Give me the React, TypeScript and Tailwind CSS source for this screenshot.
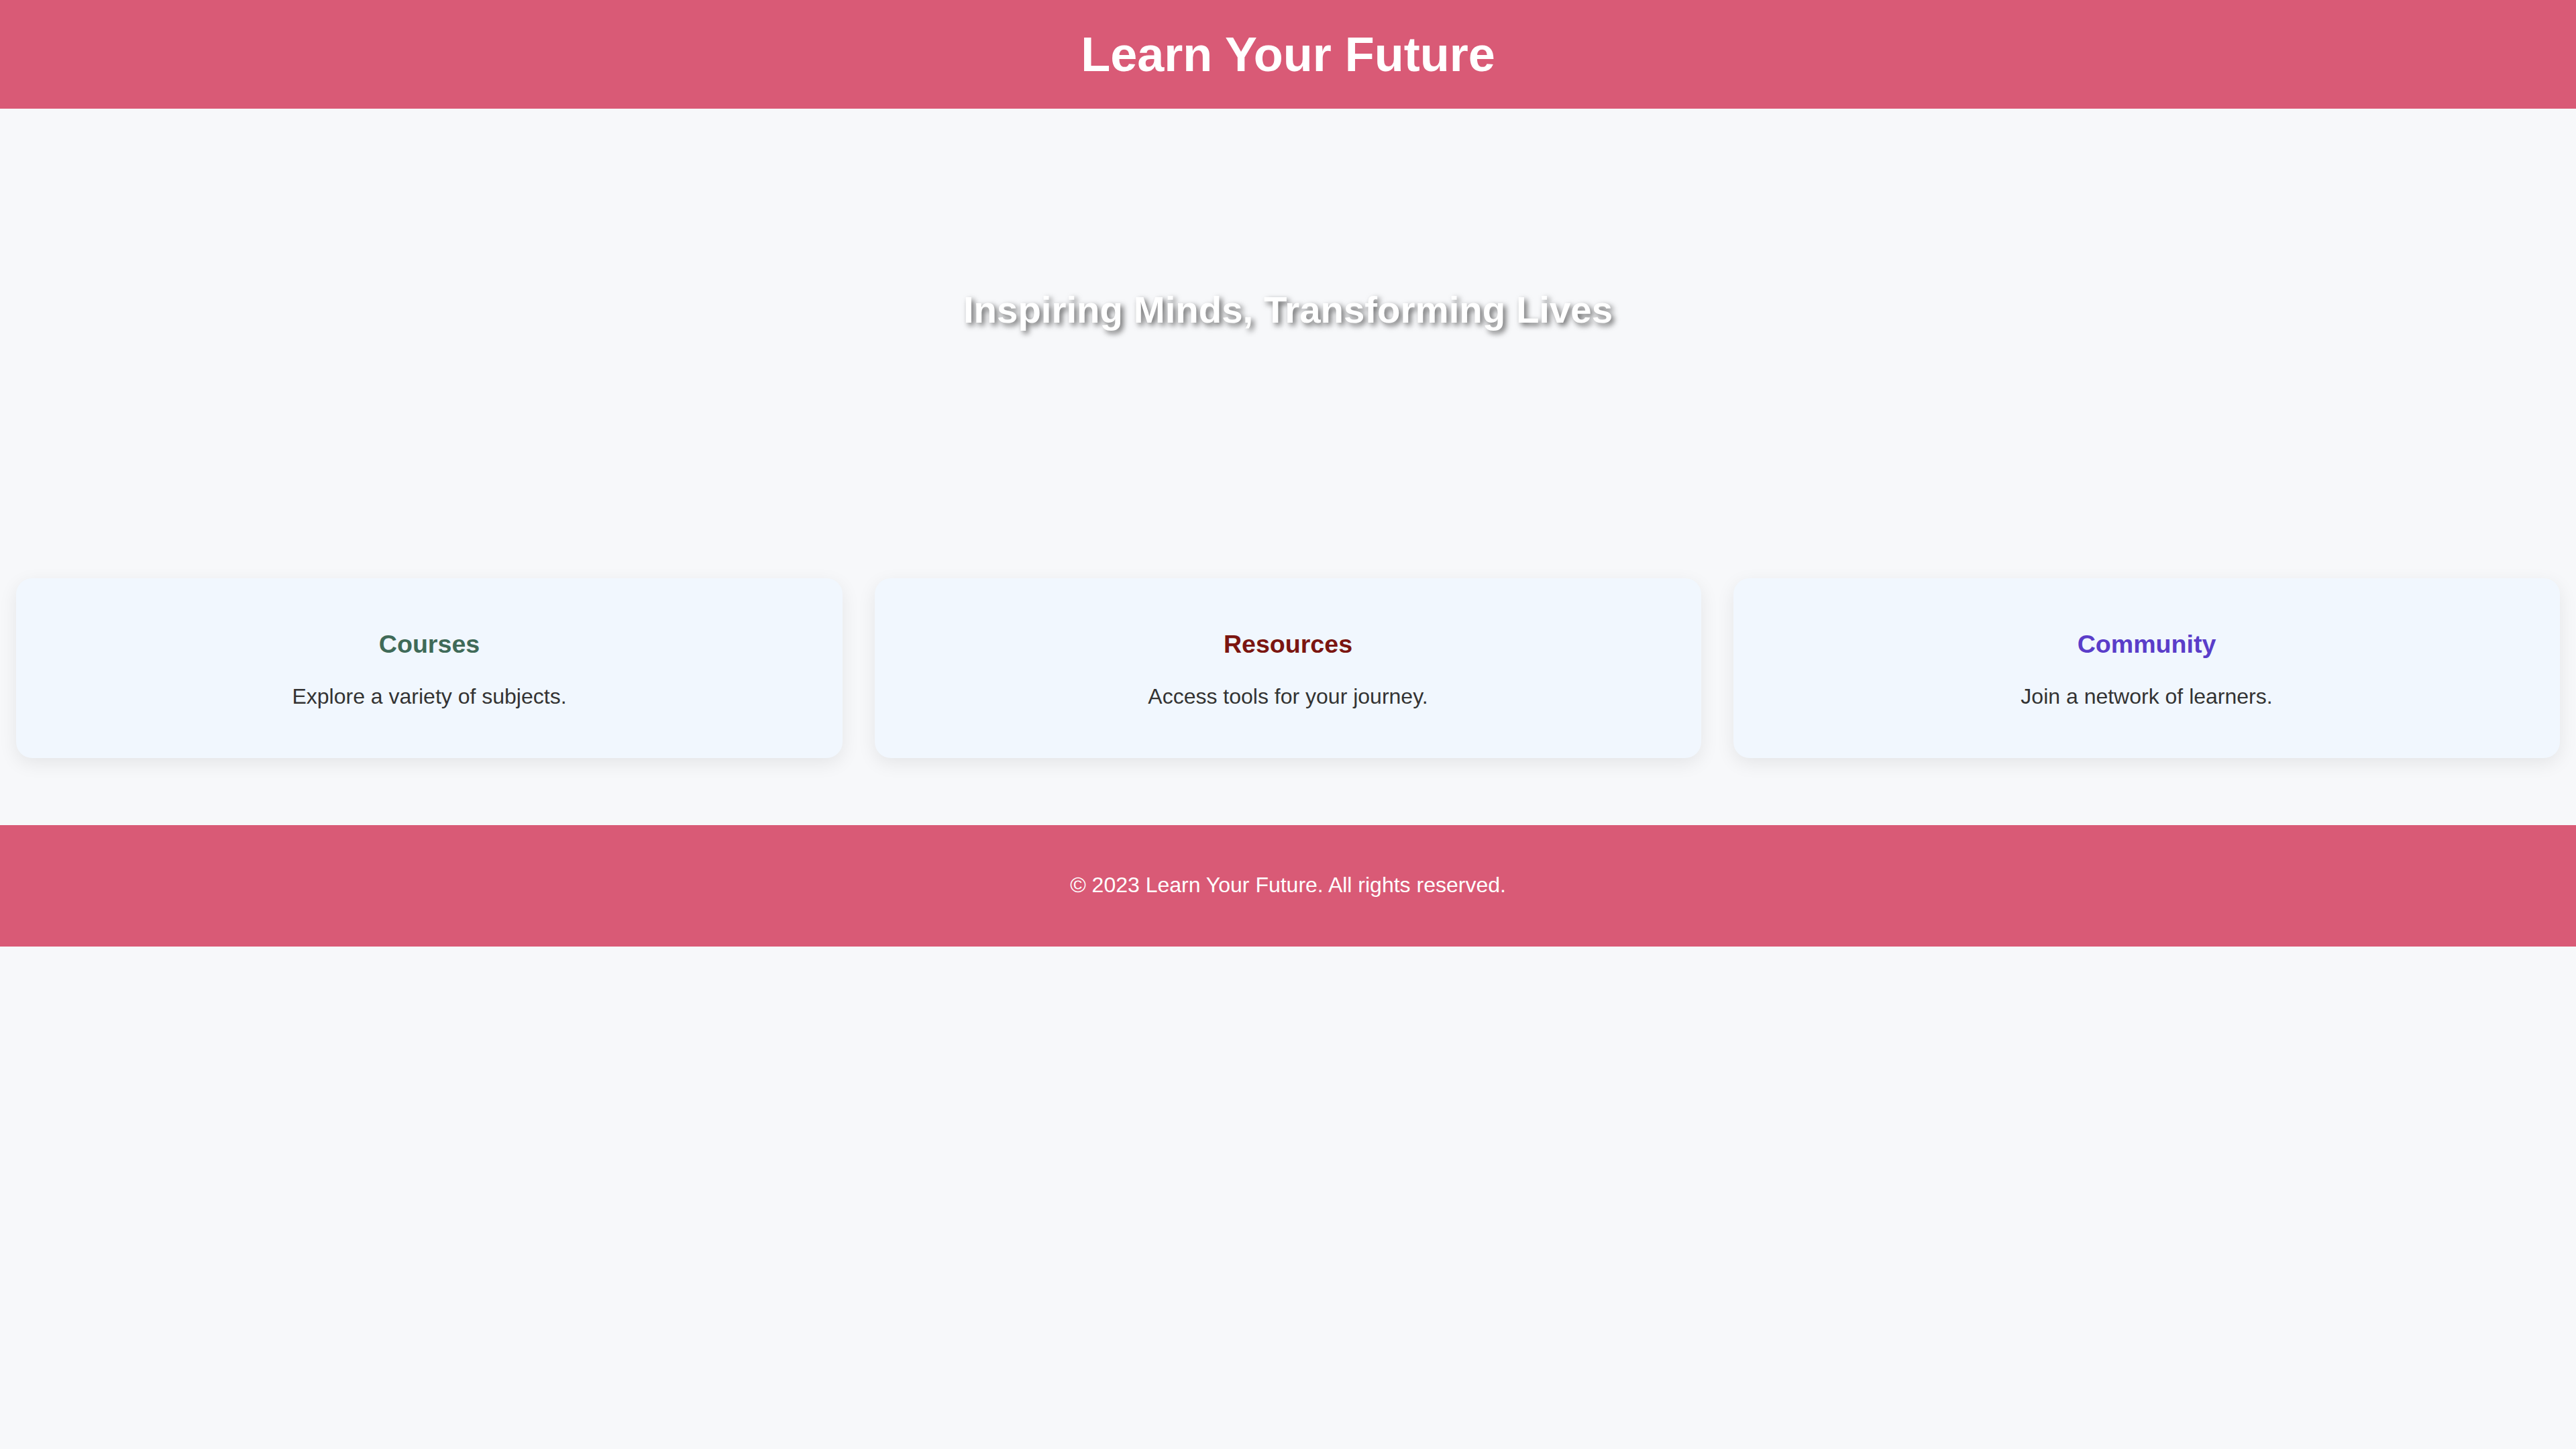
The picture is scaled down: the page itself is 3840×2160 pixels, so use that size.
import React from 'react';

interface Feature {
  title: string;
  text: string;
  color: string;
}

const features: Feature[] = [
  { title: 'Courses', text: 'Explore a variety of subjects.', color: 'text-[#3f6a58]' },
  { title: 'Resources', text: 'Access tools for your journey.', color: 'text-[#7b1510]' },
  { title: 'Community', text: 'Join a network of learners.', color: 'text-[#5a3dc9]' },
];

const FeatureCard: React.FC<{ feature: Feature }> = ({ feature }) => (
  <div className="bg-[#f1f7fe] rounded-[24px] shadow-[0_8px_28px_rgba(0,0,0,0.08)] pt-[77px] pb-[73px] px-[40px] text-center">
    <h3 className={`text-[37.6px] leading-[1.15] font-bold ${feature.color}`}>{feature.title}</h3>
    <p className="mt-[38px] text-[32px] leading-[1.15] text-[#333333]">{feature.text}</p>
  </div>
);

export default function App() {
  return (
    <div className="min-h-screen bg-[#f7f8fa] font-['Liberation_Sans',Arial,Helvetica,sans-serif]">
      {/* Header */}
      <header className="h-[162px] bg-[#d95a76] flex items-center justify-center">
        <h1 className="text-[72px] leading-[1.15] font-bold text-white">Learn Your Future</h1>
      </header>

      {/* Hero */}
      <section className="h-[600px] flex items-center justify-center">
        <h2 className="text-[56.4px] leading-[1.15] font-bold text-white [text-shadow:4px_4px_8px_rgba(0,0,0,0.6)]">
          Inspiring Minds, Transforming Lives
        </h2>
      </section>

      {/* Features */}
      <section className="pt-[100px] pb-[100px] px-[24px] grid grid-cols-3 gap-[48px]">
        {features.map((f) => (
          <FeatureCard key={f.title} feature={f} />
        ))}
      </section>

      {/* Footer */}
      <footer className="h-[181px] bg-[#d95a76] flex items-center justify-center pb-[2px]">
        <p className="text-[32px] leading-[1.15] text-white">© 2023 Learn Your Future. All rights reserved.</p>
      </footer>
    </div>
  );
}
